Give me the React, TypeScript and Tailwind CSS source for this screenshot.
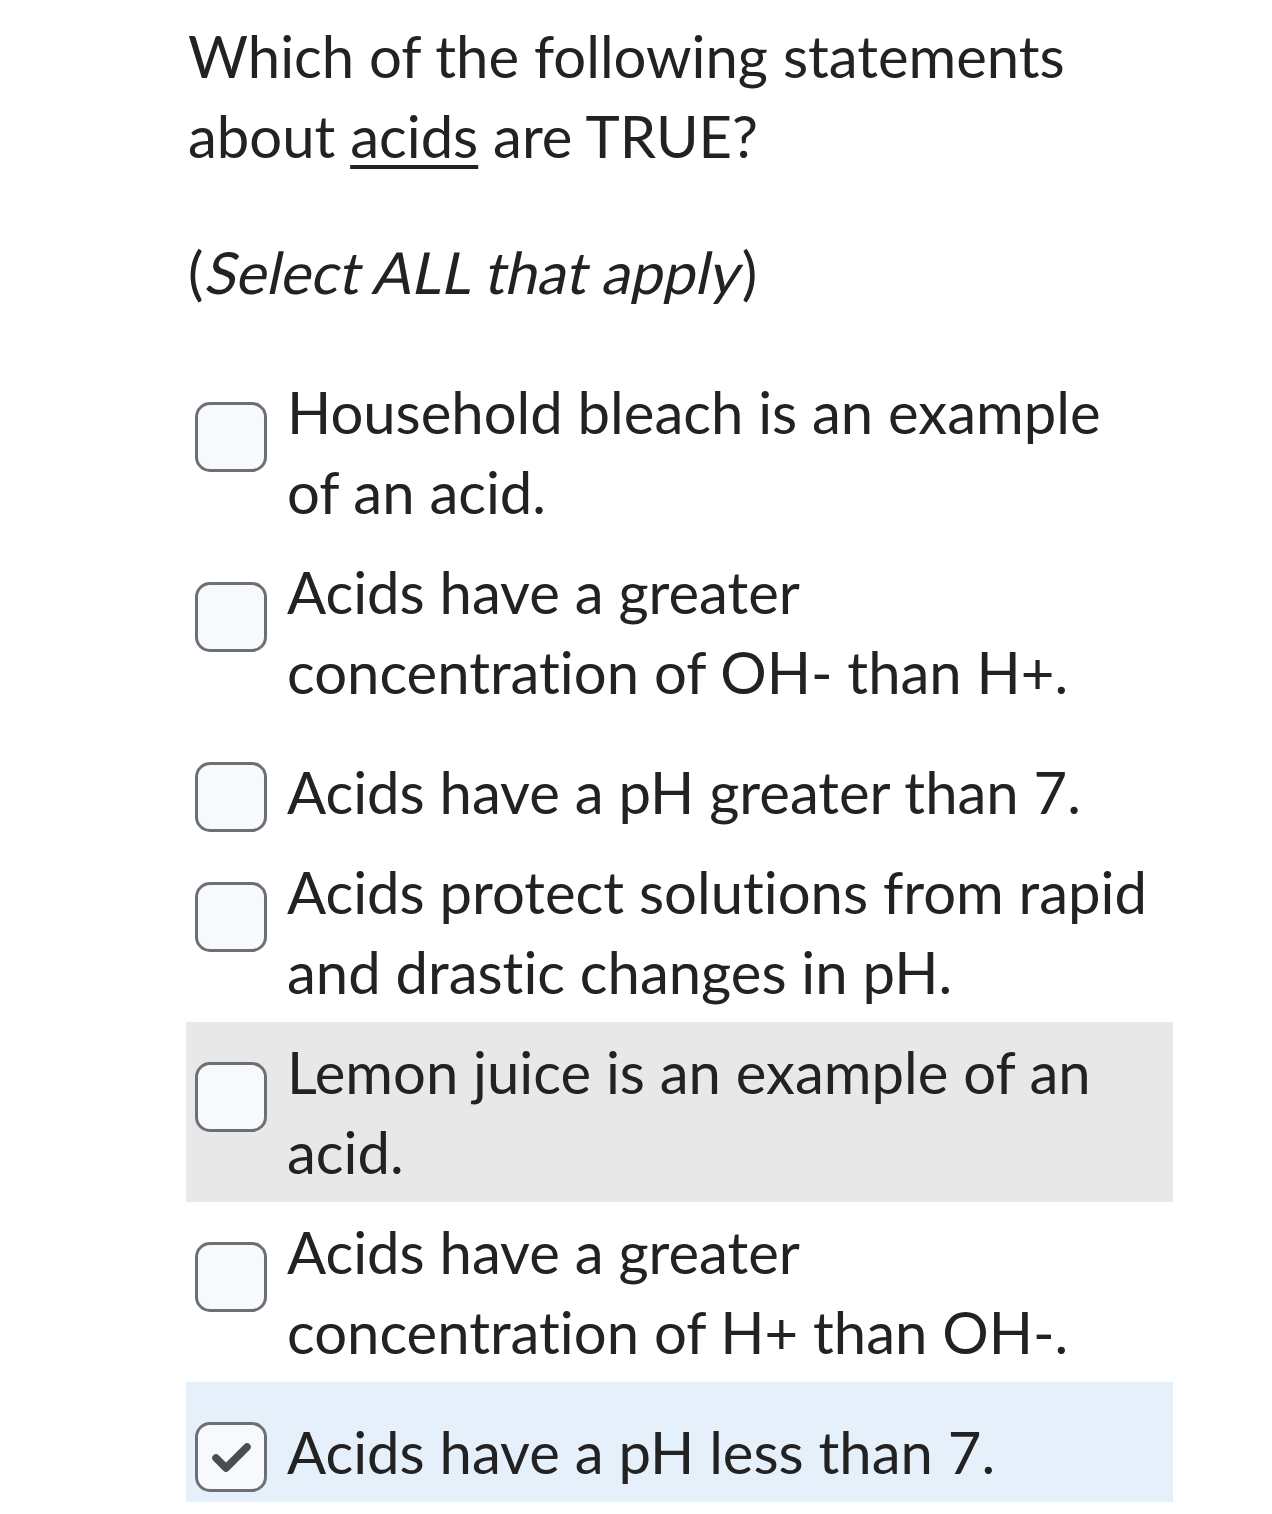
import React from "react";

type Opt = { text: string; bg?: string; checked?: boolean; single?: boolean };

const options: Opt[] = [
  { text: "Household bleach is an example of an acid." },
  { text: "Acids have a greater concentration of OH- than H+." },
  { text: "Acids have a pH greater than 7.", single: true },
  { text: "Acids protect solutions from rapid and drastic changes in pH." },
  { text: "Lemon juice is an example of an acid.", bg: "bg-[#e8e8e8]" },
  { text: "Acids have a greater concentration of H+ than OH-." },
  { text: "Acids have a pH less than 7.", bg: "bg-[#e6f0fa]", checked: true, single: true },
];

function Box({ checked }: { checked?: boolean }) {
  return (
    <div className="mt-[30px] w-[72px] h-[70px] shrink-0 rounded-[15px] border-[3px] border-[#6b7075] bg-[#f7f9fc] flex items-center justify-center">
      {checked && (
        <svg width="44" height="36" viewBox="0 0 44 36" fill="none">
          <path d="M7 19 L17 29 L38 8" stroke="#4a4d50" strokeWidth="7.5" strokeLinecap="round" strokeLinejoin="round" />
        </svg>
      )}
    </div>
  );
}

export default function App() {
  return (
    <div
      className="min-h-[1514px] bg-white text-[#222222] text-[58px] leading-[80px] [font-variant-ligatures:none]"
      style={{ fontFamily: "Lato, 'Noto Sans', sans-serif" }}
    >
      <div className="pl-[186px] pr-[99px] pt-[16px]">
        <p className="pl-[2px] w-[930px]">
          Which of the following statements about{" "}
          <span className="underline decoration-[4px] underline-offset-[7px]">acids</span> are TRUE?
        </p>
        <p className="pl-[2px] mt-[56px]">
          (<span className="inline-block -skew-x-12 pl-[4px]">Select ALL that apply</span>)
        </p>
        <div className="mt-[50px] flex flex-col">
          {options.map((o, i) => (
            <div key={i} className={`flex gap-[20px] pl-[9px] pr-[10px] py-[10px] ${o.bg ?? ""}`}>
              <Box checked={o.checked} />
              <div className={o.single ? "mt-[20px]" : ""}>{o.text}</div>
            </div>
          ))}
        </div>
      </div>
    </div>
  );
}
